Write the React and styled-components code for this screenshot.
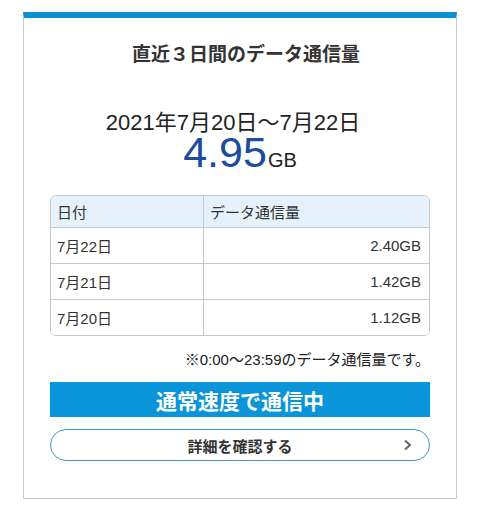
import React from "react";
import styled, { createGlobalStyle } from "styled-components";

const Global = createGlobalStyle`
  html, body { margin: 0; padding: 0; background: #fff; }
  body { font-family: "Liberation Sans", "Noto Sans CJK JP", sans-serif; color: #333; }
`;

const Page = styled.div`
  padding: 12px 23px 0 23px;
`;

const Card = styled.section`
  width: 434px;
  box-sizing: border-box;
  border-top: 6px solid #0a92d4;
  border-left: 1px solid #c9c9c9;
  border-right: 1px solid #c9c9c9;
  border-bottom: 1px solid #c9c9c9;
  padding: 25px 26px 37px 26px;
  display: flex;
  flex-direction: column;
`;

const Title = styled.h2`
  margin: 0;
  padding-left: 12px;
  font-family: "Noto Sans CJK JP", sans-serif;
  font-size: 19px;
  line-height: 19px;
  font-weight: 700;
  color: #333;
  text-align: center;
`;

const Summary = styled.div`
  margin-top: 50px;
  display: flex;
  flex-direction: column;
  align-items: center;
`;

const Period = styled.div`
  font-size: 22px;
  line-height: 22px;
  color: #222;
  margin-right: 14px;
`;

const Amount = styled.div`
  font-size: 43px;
  line-height: 36px;
  color: #1b4c9e;
`;

const Unit = styled.span`
  font-size: 20px;
  color: #222;
  margin-left: 1px;
`;

const Table = styled.div`
  margin-top: 17px;
  border: 1px solid #c8c8c8;
  border-radius: 6px;
  overflow: hidden;
  font-size: 15px;
  color: #333;
`;

const Row = styled.div`
  display: grid;
  grid-template-columns: 152px 1fr;
  height: ${(p) => (p.$head ? 31 : 35)}px;
  background: ${(p) => (p.$head ? "#e6f2fb" : "#fff")};
  border-top: ${(p) => (p.$first ? "none" : "1px solid #c8c8c8")};
`;

const Cell = styled.div`
  display: flex;
  align-items: center;
  justify-content: ${(p) => (p.$right ? "flex-end" : "flex-start")};
  padding: 0 8px 0 6px;
  border-left: ${(p) => (p.$divider ? "1px solid #c8c8c8" : "none")};
`;

const Note = styled.p`
  margin: 14px 0 0 0;
  font-size: 15px;
  line-height: 20px;
  text-align: right;
  color: #222;
`;

const Banner = styled.div`
  margin-top: 12px;
  height: 35px;
  background: #0995d8;
  color: #fff;
  font-family: "Noto Sans CJK JP", sans-serif;
  font-weight: 700;
  font-size: 21px;
  display: flex;
  align-items: center;
  justify-content: center;
`;

const DetailButton = styled.button`
  position: relative;
  margin-top: 12px;
  height: 32px;
  box-sizing: border-box;
  border: 1.5px solid #3a9bcb;
  border-radius: 16px;
  background: #fff;
  font-family: "Noto Sans CJK JP", sans-serif;
  font-weight: 700;
  font-size: 15px;
  color: #333;
  display: flex;
  align-items: center;
  justify-content: center;
  padding: 0;
  cursor: pointer;
`;

const Chevron = styled.svg`
  position: absolute;
  right: 17px;
  top: 50%;
  transform: translateY(-50%);
`;

const rows = [
  ["7月22日", "2.40GB"],
  ["7月21日", "1.42GB"],
  ["7月20日", "1.12GB"],
];

export default function App() {
  return (
    <>
      <Global />
      <Page>
        <Card>
          <Title>直近３日間のデータ通信量</Title>
          <Summary>
            <Period>2021年7月20日〜7月22日</Period>
            <Amount>
              4.95<Unit>GB</Unit>
            </Amount>
          </Summary>
          <Table>
            <Row $head $first>
              <Cell>日付</Cell>
              <Cell $divider>データ通信量</Cell>
            </Row>
            {rows.map(([d, v]) => (
              <Row key={d}>
                <Cell>{d}</Cell>
                <Cell $divider $right>
                  {v}
                </Cell>
              </Row>
            ))}
          </Table>
          <Note>※0:00〜23:59のデータ通信量です。</Note>
          <Banner>通常速度で通信中</Banner>
          <DetailButton>
            詳細を確認する
            <Chevron width="9" height="12" viewBox="0 0 9 12">
              <path d="M2 1.5 L7 6 L2 10.5" fill="none" stroke="#666" strokeWidth="2" />
            </Chevron>
          </DetailButton>
        </Card>
      </Page>
    </>
  );
}
